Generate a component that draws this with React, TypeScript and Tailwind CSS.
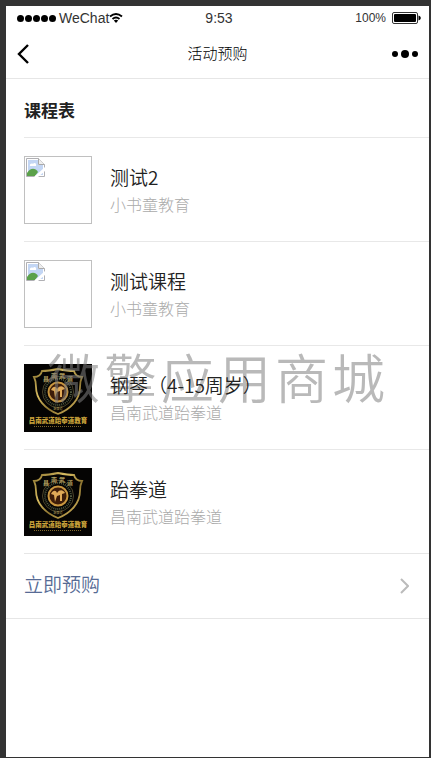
import React from "react";

type Course = { id: number; title: string; school: string; cover: "missing" | "emblem" };

const courses: Course[] = [
  { id: 1, title: "测试2", school: "小书童教育", cover: "missing" },
  { id: 2, title: "测试课程", school: "小书童教育", cover: "missing" },
  { id: 3, title: "钢琴（4-15周岁）", school: "昌南武道跆拳道", cover: "emblem" },
  { id: 4, title: "跆拳道", school: "昌南武道跆拳道", cover: "emblem" },
];

function MissingCover() {
  return (
    <div className="size-[68px] shrink-0 border border-[#c0c0c0] p-px">
      <svg viewBox="0 0 19 19" className="size-[19px]" aria-hidden="true">
        <path d="M.5.5h12l6 6v12H.5z" fill="#fff" stroke="#b0b0b4" />
        <path d="M2 2h10v5h5v10H2z" fill="#c3d6f4" />
        <path d="M4 8c-1-2 2-3 3-2 1-2 4-1 3 2z" fill="#fff" />
        <path d="M1 18v-3c3-5 8-6 11-1l-3 4z" fill="#5ba14a" />
        <path d="M8 19 19 9v4l-7 6z" fill="#fff" />
        <path d="M12.500.5v6h6" fill="#eee" stroke="#aaa" />
      </svg>
    </div>
  );
}

function EmblemCover() {
  return (
    <svg viewBox="0 0 68 68" className="size-[68px] shrink-0" role="img" aria-label="昌南武道跆拳道教育">
      <defs>
        <linearGradient id="gold" x1="0" y1="0" x2="1" y2="1">
          <stop offset="0" stopColor="#8c7530" />
          <stop offset=".35" stopColor="#d9bd62" />
          <stop offset=".6" stopColor="#8f7631" />
          <stop offset="1" stopColor="#e0c065" />
        </linearGradient>
      </defs>
      <rect width="68" height="68" fill="#050403" />
      <path
        d="M18 7c6 0 11-1 16-2 5 1 10 2 16 2 1 4 4 6 8 6-2 4-2 6-2 10 0 12-9 22-22 27C21 45 12 35 12 23c0-4 0-6-2-10 4 0 7-2 8-6z"
        fill="none"
        stroke="url(#gold)"
        strokeWidth="1.800"
      />
      <circle cx="34" cy="28" r="15.500" fill="none" stroke="#5d5635" strokeWidth=".8" />
      <circle cx="34" cy="28" r="13" fill="none" stroke="#4f5a42" strokeWidth="2" strokeDasharray="1 1" />
      <circle cx="34" cy="28" r="9.500" fill="#3d1c09" stroke="#c8963f" strokeWidth="2" />
      <path d="M27 26c2-4 5-4 6-1 3-4 6-3 8 0l-3 1v7h-2v-6l-3 1-2 6-1-7z" fill="#e0aa58" />
      <g fill="#b3a060" fontSize="6" fontWeight="700" textAnchor="middle">
        <text x="22" y="17">昌</text>
        <text x="30" y="14">南</text>
        <text x="38" y="14">武</text>
        <text x="46" y="17">道</text>
      </g>
      <text x="34" y="46" fill="#a99555" fontSize="3" textAnchor="middle">跆拳道</text>
      <text x="34" y="59" fill="#c9a23a" fontSize="6.500" fontWeight="900" textAnchor="middle">昌南武道跆拳道教育</text>
      <path d="M10 62.500h48" stroke="#80682c" strokeDasharray="1 1" />
    </svg>
  );
}

function StatusBar() {
  return (
    <div className="grid h-6 grid-cols-3 items-center pr-2 pl-[11px] text-[#333]">
      <div className="flex items-center text-sm whitespace-nowrap">
        <span className="mr-[3px] flex gap-px">
          {[0, 1, 2, 3, 4].map((n) => (
            <i key={n} className="size-[7px] rounded-full bg-black" />
          ))}
        </span>
        WeChat
        <svg viewBox="0 0 14 10" className="h-[10px] w-[14px]" fill="none" stroke="#000" aria-hidden="true">
          <path d="M1 3.500c4-3.300 8-3.300 12 0M3.500 6c2.500-2 4.500-2 7 0" strokeWidth="1.900" />
          <path d="M4.800 7.500C6 6.600 8 6.600 9.200 7.500L7 10z" fill="#000" stroke="none" />
        </svg>
      </div>
      <time className="text-center text-sm">9:53</time>
      <div className="flex items-center justify-end gap-[6px] text-xs">
        100%
        <svg viewBox="0 0 29 12" className="h-3 w-[29px]" aria-hidden="true">
          <rect x=".5" y=".5" width="25" height="11" rx="1.500" fill="#fff" stroke="#333" />
          <rect x="2" y="2" width="22" height="8" rx="1" />
          <path d="M26.500 3.500c3 1 3 4 0 5z" />
        </svg>
      </div>
    </div>
  );
}

export default function App() {
  return (
    <div className="flex min-h-screen flex-col bg-[#333] pt-[6px] pr-[2px] pb-px pl-[6px] font-['Liberation_Sans','Noto_Sans_CJK_SC',sans-serif] text-[#222]">
      <div className="flex-1 bg-white">
        <StatusBar />
        <header className="grid h-[49px] grid-cols-3 items-center border-b border-[#e6e6e6] px-[11px]">
          <button type="button" aria-label="返回" className="w-4">
            <svg viewBox="0 0 12 20" className="h-5 w-3" fill="none" stroke="#000" strokeWidth="2.400">
              <path d="M11 1 2 10l9 9" />
            </svg>
          </button>
          <h1 className="text-center text-[15px] font-light text-black">活动预购</h1>
          <button type="button" aria-label="更多" className="flex items-center justify-end gap-[3px]">
            <i className="size-[6px] rounded-full bg-black" />
            <i className="size-2 rounded-full bg-black" />
            <i className="size-[6px] rounded-full bg-black" />
          </button>
        </header>

        <main className="relative border-b border-[#e6e6e6] pl-[18px]">
          <h2 className="flex h-[58px] items-center pt-2 text-[17px] font-bold">课程表</h2>
          <ul>
            {courses.map((course) => (
              <li key={course.id} className="flex h-[104px] items-center gap-[18px] border-t border-[#e8e8e8]">
                {course.cover === "missing" ? <MissingCover /> : <EmblemCover />}
                <div className="relative z-10 pt-1">
                  <h3 className="font-['Noto_Sans_CJK_SC',sans-serif] text-[19px] leading-7 font-[350]">{course.title}</h3>
                  <p className="text-base leading-[30px] font-light text-[#aaa]">{course.school}</p>
                </div>
              </li>
            ))}
          </ul>
          <a href="#book" className="flex h-[65px] items-center justify-between border-t border-[#e6e6e6] pr-5 text-[19px] font-[350] text-[#576b95]">
            立即预购
            <svg viewBox="0 0 9 16" className="h-4 w-[9px]" fill="none" stroke="#bbb" strokeWidth="2" aria-hidden="true">
              <path d="m1 1 7 7-7 7" />
            </svg>
          </a>
          <div className="pointer-events-none absolute top-[272px] left-[41px] flex gap-1 text-[53px] leading-[60px] font-[350] whitespace-nowrap text-[#7f7f7f]/55">
            {Array.from("微擎应用商城").map((glyph) => (
              <span key={glyph}>{glyph}</span>
            ))}
          </div>
        </main>
      </div>
    </div>
  );
}
